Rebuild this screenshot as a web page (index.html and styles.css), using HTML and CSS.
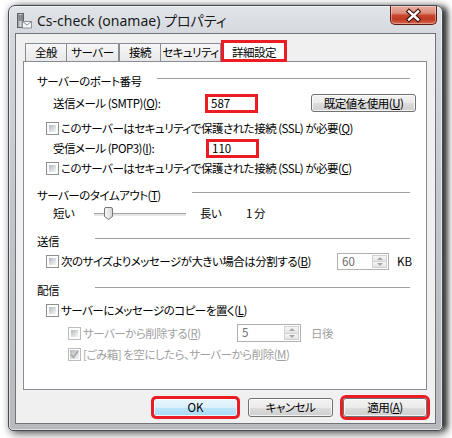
FILE: index.html
```html
<!DOCTYPE html>
<html lang="ja">
<head>
<meta charset="utf-8">
<title>Cs-check (onamae) プロパティ</title>
<link rel="stylesheet" href="styles.css">
</head>
<body>
<div class="window">
  <div class="titlebar">
    <svg class="app-icon" width="16" height="16" viewBox="0 0 16 16">
      <defs>
        <linearGradient id="tw" x1="0" y1="0" x2="1" y2="0">
          <stop offset="0" stop-color="#8b9197"/>
          <stop offset="0.5" stop-color="#d3d7db"/>
          <stop offset="1" stop-color="#767c82"/>
        </linearGradient>
      </defs>
      <rect x="1.5" y="0.5" width="6" height="14" fill="url(#tw)" stroke="#5f6368"/>
      <line x1="2.5" y1="3" x2="6.5" y2="3" stroke="#4e5358"/>
      <line x1="2.5" y1="5" x2="6.5" y2="5" stroke="#4e5358"/>
      <line x1="2.5" y1="7" x2="6.5" y2="7" stroke="#4e5358"/>
      <rect x="6.5" y="8.5" width="9" height="6.5" fill="#f5f6f7" stroke="#8c9094"/>
      <path d="M6.5 8.5 L11 12 L15.5 8.5" fill="none" stroke="#8c9094"/>
    </svg>
    <span class="title">Cs-check (onamae) プロパティ</span>
    <div class="close">
      <svg width="47" height="19" viewBox="0 0 47 19">
        <path d="M19 5.5 L28 13.5 M28 5.5 L19 13.5" stroke="#3b1209" stroke-width="4.6" stroke-linecap="square" fill="none"/>
        <path d="M19 5.5 L28 13.5 M28 5.5 L19 13.5" stroke="#ffffff" stroke-width="2.4" stroke-linecap="square" fill="none"/>
      </svg>
    </div>
  </div>
  <div class="client">
    <div class="tabs">
      <div class="tab t-general">全般</div>
      <div class="tab t-server">サーバー</div>
      <div class="tab t-conn">接続</div>
      <div class="tab t-sec">セキュリティ</div>
      <div class="tab active">詳細設定</div>
    </div>
    <div class="panel">
      <div class="row">
        <span class="head-label w-port">サーバーのポート番号</span><span class="rule"></span>
      </div>
      <div class="row m4 ind-label">
        <span class="field-label w-smtp">送信メール (SMTP)(<u>O</u>):</span>
        <span class="port-box">587</span>
        <span class="btn btn-defaults">既定値を使用(<u>U</u>)</span>
      </div>
      <div class="row m7 ind-cb">
        <span class="cb"></span><span>このサーバーはセキュリティで保護された接続 (SSL) が必要(<u>Q</u>)</span>
      </div>
      <div class="row m2 ind-label">
        <span class="field-label w-pop">受信メール (POP3)(<u>I</u>):</span>
        <span class="port-box">110</span>
      </div>
      <div class="row m2 ind-cb">
        <span class="cb"></span><span>このサーバーはセキュリティで保護された接続 (SSL) が必要(<u>C</u>)</span>
      </div>

      <div class="row m9">
        <span class="head-label w-timeout">サーバーのタイムアウト(<u>T</u>)</span><span class="rule"></span>
      </div>
      <div class="row ind-label">
        <span class="w-short">短い</span>
        <span class="slider"><span class="track"></span>
          <svg class="thumb" width="9" height="13" viewBox="0 0 9 13">
            <defs>
              <linearGradient id="th" x1="0" y1="0" x2="1" y2="0">
                <stop offset="0" stop-color="#fbfbfb"/>
                <stop offset="1" stop-color="#d4d4d4"/>
              </linearGradient>
            </defs>
            <path d="M0.5 2 Q0.5 0.5 2 0.5 H7 Q8.5 0.5 8.5 2 V9.5 L4.5 12.5 L0.5 9.5 Z" fill="url(#th)" stroke="#757575"/>
          </svg>
        </span>
        <span class="w-long">長い</span>
        <span>1 分</span>
      </div>

      <div class="row m10">
        <span class="head-label w-send">送信</span><span class="rule"></span>
      </div>
      <div class="row m2 ind-cb">
        <span class="cb"></span><span class="w-split">次のサイズよりメッセージが大きい場合は分割する(<u>B</u>)</span>
        <span class="spin spin-kb"><span class="spin-val">60</span><span class="spin-btns"><span class="spin-up"></span><span class="spin-dn"></span></span></span>
        <span class="unit-kb">KB</span>
      </div>

      <div class="row m11">
        <span class="head-label w-send">配信</span><span class="rule"></span>
      </div>
      <div class="row m2 ind-cb">
        <span class="cb"></span><span>サーバーにメッセージのコピーを置く(<u>L</u>)</span>
      </div>
      <div class="row m5 ind-sub disabled">
        <span class="cb cb-off"></span><span class="w-del">サーバーから削除する(<u>R</u>)</span>
        <span class="spin spin-days"><span class="spin-val">5</span><span class="spin-btns"><span class="spin-up"></span><span class="spin-dn"></span></span></span>
        <span class="unit-days">日後</span>
      </div>
      <div class="row m3 ind-sub disabled">
        <span class="cb cb-off cb-checked">
          <svg width="9" height="9" viewBox="0 0 9 9"><path d="M1 4.5 L3.5 7.5 L8 1" fill="none" stroke="#a7a7a7" stroke-width="1.6"/></svg>
        </span><span>[ごみ箱] を空にしたら、サーバーから削除(<u>M</u>)</span>
      </div>
    </div>
    <div class="buttons">
      <span class="btn btn-ok hl-ok">OK</span>
      <span class="btn btn-cancel">キャンセル</span>
      <span class="btn btn-apply hl-apply">適用(<u>A</u>)</span>
    </div>
  </div>
</div>
</body>
</html>
```
FILE: styles.css
```css
html, body {
  margin: 0;
  padding: 0;
}
body {
  width: 452px;
  height: 438px;
  overflow: hidden;
  background: #ffffff;
  font-family: "Noto Sans CJK JP", sans-serif;
  font-size: 11.5px;
  letter-spacing: -0.5px;
  font-feature-settings: "palt";
  color: #000;
  padding: 5px 0 0 8px;
  box-sizing: border-box;
}
u { text-decoration: underline; text-underline-offset: 1px; }

.window {
  width: 435px;
  height: 426px;
  box-sizing: border-box;
  border: 1px solid #474c52;
  border-radius: 7px 7px 5px 5px;
  background: linear-gradient(#e1e5ea 0, #d5d9de 30px, #c3c6ca 200px, #b7b9bc 100%);
  box-shadow: inset 0 0 0 1px rgba(255,255,255,0.55), 6px 0 5px -2px rgba(0,0,0,0.55), 3px 2px 8px 1px rgba(0,0,0,0.6);
  padding: 0 6px 6px;
  display: flex;
  flex-direction: column;
}

.titlebar {
  height: 27px;
  display: flex;
  align-items: flex-start;
  flex: none;
}
.app-icon {
  margin: 7px 0 0 1px;
  flex: none;
}
.title {
  margin: 6px 0 0 5px;
  line-height: 18px;
  font-family: "Noto Sans", "Noto Sans CJK JP", sans-serif;
  font-size: 14px;
  letter-spacing: 0;
  color: #1a1a1a;
  white-space: nowrap;
}
.close {
  margin-left: auto;
  margin-right: -1px;
  width: 47px;
  height: 19px;
  box-sizing: border-box;
  border: 1px solid #5b1d13;
  border-top: none;
  border-radius: 0 0 5px 5px;
  background: linear-gradient(#eab0a3 0, #dc8b79 40%, #c9452e 52%, #c13b24 75%, #d9694f 100%);
  box-shadow: inset 0 0 0 1px rgba(255,255,255,0.35);
  display: flex;
  align-items: center;
  justify-content: center;
  overflow: hidden;
}
.close svg { flex: none; }

.client {
  flex: none;
  width: 421px;
  height: 391px;
  box-sizing: border-box;
  border: 1px solid #6f747a;
  background: #f0f0f0;
  padding: 6px 8px 0 7px;
}

.tabs {
  display: flex;
  align-items: flex-start;
  height: 21px;
  padding-left: 2px;
}
.tab {
  box-sizing: border-box;
  height: 18px;
  margin-top: 3px;
  border: 1px solid #898c95;
  border-bottom: none;
  background: linear-gradient(#f7f7f7, #e8e8e8);
  text-align: center;
  line-height: 17px;
  white-space: nowrap;
  overflow: hidden;
  flex: none;
}
.t-general { width: 42px; }
.t-server { width: 52px; border-left: none; }
.t-conn { width: 42px; }
.t-sec { width: 60px; border-left: none; }
.tab.active {
  width: 66px;
  height: 22px;
  margin-top: 0;
  border: 3px solid #ec1c24;
  background: #fff;
  line-height: 16px;
  padding-top: 1px;
  position: relative;
  z-index: 2;
}

.panel {
  width: 404px;
  height: 329px;
  box-sizing: border-box;
  border: 1px solid #898c95;
  background: #fff;
  padding: 10px 16px 0 13px;
  display: flex;
  flex-direction: column;
}

.row {
  display: flex;
  align-items: center;
  height: 18px;
  white-space: nowrap;
  flex: none;
}
.m2 { margin-top: 2px; }
.m3 { margin-top: 3px; }
.m4 { margin-top: 4px; }
.m5 { margin-top: 5px; }
.m7 { margin-top: 7px; }
.m9 { margin-top: 9px; }
.m10 { margin-top: 10px; }
.m11 { margin-top: 11px; }

.ind-label { padding-left: 16px; }
.ind-cb { padding-left: 9px; }
.ind-sub { padding-left: 31px; }

.head-label { flex: none; }
.w-port { width: 120px; }
.w-timeout { width: 155px; }
.w-send { width: 58px; }
.rule {
  flex: 1;
  height: 0;
  border-top: 1px solid #a0a0a0;
  border-bottom: 1px solid #ffffff;
  margin-bottom: 4px;
}

.field-label { flex: none; }
.w-smtp { width: 152px; }
.w-pop { width: 153px; }
.port-box {
  flex: none;
  width: 53px;
  height: 19px;
  box-sizing: border-box;
  border: 3px solid #ec1c24;
  background: #fff;
  padding-left: 3px;
  line-height: 13px;
  letter-spacing: 0;
}

.btn {
  flex: none;
  box-sizing: border-box;
  border: 1px solid #707070;
  border-radius: 3px;
  background: linear-gradient(#f2f2f2 0, #ebebeb 50%, #dddddd 50%, #cfcfcf 100%);
  box-shadow: inset 0 0 0 1px rgba(255,255,255,0.75);
  text-align: center;
  height: 19px;
  line-height: 17px;
}
.btn-defaults {
  width: 105px;
  height: 18px;
  line-height: 16px;
  margin-left: 53px;
}

.cb {
  flex: none;
  width: 13px;
  height: 13px;
  box-sizing: border-box;
  border: 1px solid #8e8f8f;
  padding: 2px;
  background: linear-gradient(135deg, #b3b8be 0, #e4e6e9 70%, #f4f4f4 100%) content-box, #fdfdfd;
  margin-right: 2px;
}
.cb-off {
  border-color: #bcbcbc;
  background: #f6f6f6 content-box, #fdfdfd;
}
.cb-checked {
  padding: 1px;
  display: flex;
  align-items: center;
  justify-content: center;
}
.disabled { color: #a0a0a0; }

.w-short { width: 41px; flex: none; }
.slider {
  flex: none;
  width: 92px;
  height: 13px;
  position: relative;
  display: flex;
  align-items: center;
}
.track {
  display: block;
  width: 100%;
  height: 2px;
  border-top: 1px solid #a3a3a3;
  background: #e6e6e6;
  margin-top: 2px;
}
.thumb {
  position: absolute;
  left: 10px;
  top: 0;
}
.w-long { width: 46px; flex: none; margin-left: 14px; }

.w-split { width: 276px; flex: none; }
.w-del { width: 154px; flex: none; }

.spin {
  flex: none;
  display: flex;
  box-sizing: border-box;
  height: 17px;
  border: 1px solid #b1b1b1;
  background: #fff;
  color: #6d6d6d;
  padding: 1px;
  letter-spacing: 0;
}
.spin-kb { width: 52px; }
.spin-days { width: 64px; height: 18px; }
.spin-val {
  flex: 1;
  padding-left: 3px;
  line-height: 13px;
}
.spin-btns {
  width: 15px;
  display: flex;
  flex-direction: column;
}
.spin-up, .spin-dn {
  flex: 1;
  box-sizing: border-box;
  border: 1px solid #d2d2d2;
  background: linear-gradient(#f7f7f7, #e3e3e3);
  display: flex;
  align-items: center;
  justify-content: center;
}
.spin-dn { border-top: none; }
.spin-up::after {
  content: "";
  border-left: 3px solid transparent;
  border-right: 3px solid transparent;
  border-bottom: 3px solid #a8a8a8;
}
.spin-dn::after {
  content: "";
  border-left: 3px solid transparent;
  border-right: 3px solid transparent;
  border-top: 3px solid #a8a8a8;
}
.unit-kb { margin-left: 8px; letter-spacing: 0; }
.unit-days { margin-left: 10px; }

.buttons {
  display: flex;
  justify-content: flex-end;
  gap: 10px;
  margin-top: 8px;
}
.btn-ok {
  width: 85px;
  letter-spacing: 0;
  border-color: #3c7fb1;
  background: linear-gradient(#eaf6fd 0, #d9f0fc 50%, #bee6fd 50%, #a7d9f5 100%);
}
.btn-cancel { width: 85px; }
.btn-apply { width: 84px; }
.hl-ok { outline: 3px solid #ec1c24; outline-offset: -1px; }
.hl-apply { outline: 3px solid #ec1c24; outline-offset: 0; }
```
